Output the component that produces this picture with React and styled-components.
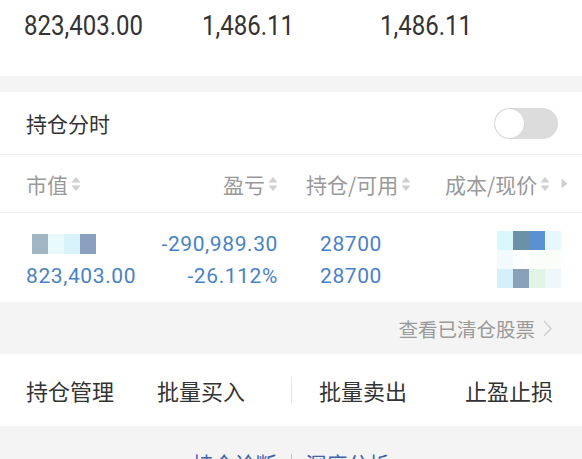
import React from "react";
import styled, { createGlobalStyle } from "styled-components";

const Global = createGlobalStyle`
  html, body { margin: 0; padding: 0; background: #f4f4f4; }
  body { font-family: Roboto, "Noto Sans CJK SC", sans-serif; }
  * { box-sizing: border-box; }
`;

const Page = styled.div`
  width: 582px;
  height: 459px;
  overflow: hidden;
  background: #f4f4f4;
  display: flex;
  flex-direction: column;
  & > * { flex-shrink: 0; }
`;

const Summary = styled.div`
  background: #fff;
  height: 76px;
  display: flex;
  align-items: flex-start;
  padding: 9px 0 0 24px;
`;

const SummaryValue = styled.div`
  width: ${(p) => p.$w}px;
  font-family: Roboto, sans-serif;
  font-size: 24px;
  line-height: 30px;
  color: #333;
  transform: scaleY(1.12);
  transform-origin: top left;
`;

const Card = styled.div`
  background: #fff;
  margin-top: ${(p) => p.$mt || 0}px;
`;

const ToggleRow = styled.div`
  height: 63px;
  display: flex;
  align-items: center;
  justify-content: space-between;
  padding: 0 24px 0 26px;
  border-bottom: 1px solid #efefef;
`;

const Title = styled.span`
  font-family: "Noto Sans CJK SC", sans-serif;
  font-size: 21px;
  color: #333;
`;

const Switch = styled.div`
  width: 64px;
  height: 31px;
  border-radius: 16px;
  background: #dcdcdc;
  position: relative;
  &::after {
    content: "";
    position: absolute;
    left: 1px;
    top: 1px;
    width: 29px;
    height: 29px;
    border-radius: 50%;
    background: #fff;
    box-shadow: 0 0 1px rgba(0, 0, 0, 0.15);
  }
`;

const HeadRow = styled.div`
  height: 58px;
  display: flex;
  align-items: center;
  padding-left: 26px;
  border-bottom: 1px solid #efefef;
`;

const Cell = styled.div`
  width: ${(p) => p.$w}px;
  padding-left: ${(p) => p.$pl || 0}px;
  display: flex;
  flex-direction: column;
  align-items: ${(p) => (p.$right ? "flex-end" : "flex-start")};
`;

const HeadLabel = styled.span`
  font-family: "Noto Sans CJK SC", sans-serif;
  font-size: 21px;
  color: #999;
  display: inline-flex;
  align-items: center;
  gap: 3px;
`;

const SortIcon = () => (
  <svg width="10" height="16" viewBox="0 0 10 16">
    <path d="M5 1 L9.5 6.5 L0.5 6.5 Z" fill="#cfcfcf" />
    <path d="M5 15 L9.5 9.5 L0.5 9.5 Z" fill="#cfcfcf" />
  </svg>
);

const MoreArrow = styled.span`
  margin-left: 8px;
  display: inline-flex;
`;

const DataRow = styled.div`
  height: 89px;
  display: flex;
  align-items: center;
  padding: 4px 0 0 26px;
`;

const Num = styled.span`
  font-family: Roboto, sans-serif;
  font-size: 21px;
  line-height: 32px;
  color: #4a82c4;
  letter-spacing: 0.6px;
`;

const Mosaic = styled.div`
  display: grid;
  grid-template-columns: repeat(${(p) => p.$cols}, 16px);
  grid-auto-rows: ${(p) => p.$rh}px;
  margin: ${(p) => p.$m || 0};
`;

const Tile = styled.div`
  background: ${(p) => p.$c};
`;

const ClearedBar = styled.div`
  height: 52px;
  display: flex;
  align-items: center;
  justify-content: flex-end;
  padding-right: 30px;
  gap: 8px;
`;

const ClearedText = styled.span`
  font-family: "Noto Sans CJK SC", sans-serif;
  font-size: 19.5px;
  color: #9a9a9a;
`;

const ActionBar = styled.div`
  background: #fff;
  height: 72px;
  display: flex;
  align-items: center;
  padding-left: 26px;
`;

const Action = styled.span`
  font-family: "Noto Sans CJK SC", sans-serif;
  font-size: 22px;
  color: #333;
  margin-left: ${(p) => p.$ml || 0}px;
`;

const Sep = styled.span`
  width: 1px;
  height: 26px;
  background: #e6e6e6;
  margin-left: ${(p) => p.$ml || 0}px;
`;

const Footer = styled.div`
  flex: 1;
  display: flex;
  justify-content: center;
  align-items: flex-start;
  padding-top: 22px;
  gap: 14px;
`;

const FooterLink = styled.span`
  font-family: "Noto Sans CJK SC", sans-serif;
  font-size: 21px;
  line-height: 30px;
  color: #3f63ab;
`;

const FooterSep = styled.span`
  width: 1px;
  height: 22px;
  margin-top: 6px;
  background: #b8c4dc;
`;

const row1 = ["#a2b5c5", "#e9fafd", "#d9f3fa", "#8b9fc1"];
const mos4 = [
  "#d8f8fc", "#6b91a8", "#5a91d0", "#e6f8fd",
  "#f2fafe", "#ffffff", "#fbfdf8", "#fbfdf8",
  "#d3f0fb", "#8aa1b8", "#e2f4e6", "#eef8fc",
];

export default function App() {
  return (
    <Page>
      <Global />
      <Summary>
        <SummaryValue $w={178}>823,403.00</SummaryValue>
        <SummaryValue $w={178}>1,486.11</SummaryValue>
        <SummaryValue $w={150}>1,486.11</SummaryValue>
      </Summary>
      <Card $mt={16}>
        <ToggleRow>
          <Title>持仓分时</Title>
          <Switch />
        </ToggleRow>
        <HeadRow>
          <Cell $w={140}>
            <HeadLabel>市值<SortIcon /></HeadLabel>
          </Cell>
          <Cell $w={112} $right>
            <HeadLabel>盈亏<SortIcon /></HeadLabel>
          </Cell>
          <Cell $w={167} $pl={28}>
            <HeadLabel>持仓/可用<SortIcon /></HeadLabel>
          </Cell>
          <Cell $w={137}>
            <HeadLabel>
              成本/现价<SortIcon />
              <MoreArrow>
                <svg width="7" height="11" viewBox="0 0 7 11">
                  <path d="M0.5 0.5 L6.5 5.5 L0.5 10.5 Z" fill="#cfcfcf" />
                </svg>
              </MoreArrow>
            </HeadLabel>
          </Cell>
        </HeadRow>
        <DataRow>
          <Cell $w={140}>
            <Mosaic $cols={4} $rh={20} $m="6px 0 6px 6px">
              {row1.map((c, i) => (
                <Tile key={i} $c={c} />
              ))}
            </Mosaic>
            <Num>823,403.00</Num>
          </Cell>
          <Cell $w={112} $right>
            <Num>-290,989.30</Num>
            <Num>-26.112%</Num>
          </Cell>
          <Cell $w={167} $pl={42}>
            <Num>28700</Num>
            <Num>28700</Num>
          </Cell>
          <Cell $w={137} $pl={52}>
            <Mosaic $cols={4} $rh={19}>
              {mos4.map((c, i) => (
                <Tile key={i} $c={c} />
              ))}
            </Mosaic>
          </Cell>
        </DataRow>
      </Card>
      <ClearedBar>
        <ClearedText>查看已清仓股票</ClearedText>
        <svg width="9" height="17" viewBox="0 0 9 17">
          <path d="M1 1 L8 8.5 L1 16" fill="none" stroke="#cfcfcf" strokeWidth="1.4" />
        </svg>
      </ClearedBar>
      <ActionBar>
        <Action>持仓管理</Action>
        <Action $ml={43}>批量买入</Action>
        <Sep $ml={46} />
        <Action $ml={27}>批量卖出</Action>
        <Action $ml={58}>止盈止损</Action>
      </ActionBar>
      <Footer>
        <FooterLink>持仓诊断</FooterLink>
        <FooterSep />
        <FooterLink>深度分析</FooterLink>
      </Footer>
    </Page>
  );
}
